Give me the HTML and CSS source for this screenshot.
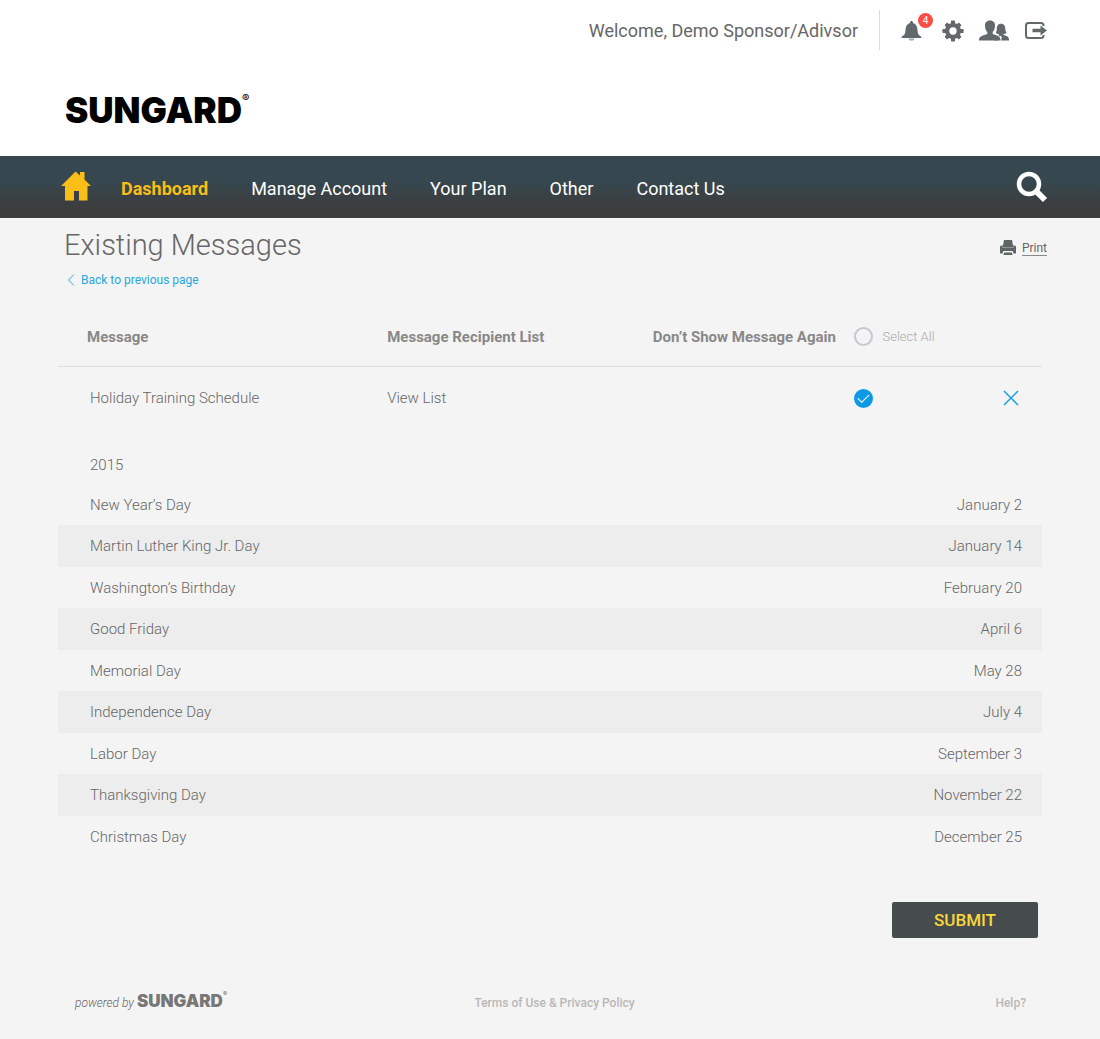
FILE: index.html
```html
<!DOCTYPE html>
<html lang="en">
<head>
<meta charset="utf-8">
<meta name="viewport" content="width=device-width, initial-scale=1">
<title>Existing Messages</title>
<link rel="stylesheet" href="styles.css">
</head>
<body>
<header class="header">
  <div class="userbar">
    <span class="welcome">Welcome, Demo Sponsor/Adivsor</span>
    <div class="tools">
      <button class="tool" type="button" aria-label="Notifications">
        <svg width="24" height="22" viewBox="-2 0 24 22"><path fill="#63696b" d="M9 2.500C9 .5 12 .5 12 2.500V3c3.200 1 4.300 3.500 4.500 7 .2 4 1 4.800 3.800 6.800V18H.7v-1.200C3.500 14.800 4.300 14 4.500 10 4.700 6.500 5.800 4 9 3z"/><path fill="#a9adae" d="M7.500 18.500h6c0 3-6 3-6 0z"/></svg>
        <span class="badge">4</span>
      </button>
      <button class="tool" type="button" aria-label="Settings">
        <svg width="24" height="22" viewBox="-3 0 24 22" overflow="visible"><g fill="#63696b"><path fill-rule="evenodd" d="M11 3a8 8 0 1 0 0 16 8 8 0 0 0 0-16zm0 4.300a3.700 3.700 0 1 1 0 7.400 3.700 3.700 0 0 1 0-7.400z"/><path d="M9 4V1l.6-.6h2.800L13 1v3zM9 18v3l.6.6h2.800L13 21v-3zM4 9H1l-.6.6v2.800L1 13h3zM18 9h3l.6.6v2.800L21 13h-3z"/><path transform="rotate(45 11 11)" d="M9 4V1.500l.6-.6h2.800l.6.6V4zM9 18v2.500l.6.6h2.800l.6-.6V18zM4 9H1.500l-.6.6v2.800l.6.6H4zM18 9h2.500l.6.6v2.800l-.6.6H18z"/></g></svg>
      </button>
      <button class="tool" type="button" aria-label="Contacts">
        <svg width="30" height="22" viewBox="0 0 30 22"><path fill="#63696b" d="M22 3.800c3 0 4.300 2.200 4.300 5 0 2.300.8 3 1.200 4.200-.9.700-2 .9-3 .9v1.200c3 .9 5.500 1.500 5.500 4.500V20.500H15V16l4.800-1v-1.100c-1 0-2-.2-3-.9.500-1.200 1-1.900 1-4.200 0-2.800 1.200-5 4.200-5z"/><path fill="#fff" d="M15.500 13.500 20 15.500l1 1 .8-1 1 2-.8 3.500h-3z"/><path fill="#63696b" d="M11 .5c3.500 0 5.200 2.300 5 5.500-.2 2.800-.9 4.700-2.300 6v2c4 1.500 7.800 2 7.800 6v.5H0V20c0-4 4.500-4.500 8.300-6v-2C6.900 10.700 6.200 8.800 6 6 5.800 2.800 7.500.5 11 .5z"/></svg>
      </button>
      <button class="tool" type="button" aria-label="Sign out">
        <svg width="22" height="22" viewBox="0 0 22 22"><path fill="none" stroke="#63696b" stroke-width="2" d="M18.500 6V5.500q0-2.500-2.500-2.500H3.500Q1 3 1 5.500v10Q1 18 3.500 18H16q2.500 0 2.500-2.500V15"/><path fill="#63696b" d="M7.500 8.700h8V5.500l6.500 5-6.500 5v-3.200h-8z"/></svg>
      </button>
    </div>
  </div>
  <a class="logo" href="#">SUNGARD<sup class="mark">®</sup></a>
</header>

<nav class="nav" aria-label="Main">
  <a class="home" href="#" aria-label="Home"><svg width="30" height="30" viewBox="0 0 30 30"><path fill="#f9be17" d="M14.500.5 19 4.500V1h4.500v7.500L30 15h-3.500v14.500H18V20h-5v9.500H4V15H0z"/></svg></a>
  <a class="navlink current" href="#" aria-current="page">Dashboard</a>
  <a class="navlink" href="#">Manage Account</a>
  <a class="navlink" href="#">Your Plan</a>
  <a class="navlink" href="#">Other</a>
  <a class="navlink" href="#">Contact Us</a>
  <button class="search" type="button" aria-label="Search"><svg width="32" height="32" viewBox="0 0 32 32"><g fill="none" stroke="#fff"><circle cx="13" cy="13" r="10" stroke-width="4.500"/><path stroke-width="6" d="M19.500 19.500 29 29"/></g></svg></button>
</nav>

<main class="main">
  <div class="titlebar">
    <h1 class="title">Existing Messages</h1>
    <a class="print" href="#"><svg width="16" height="16" viewBox="0 0 16 16"><path fill="#5f6466" d="M4 0h8l1 5.500h1.500Q16 5.500 16 7v6.500h-2.500L12.500 11h-9l-1 2.500H0V7q0-1.500 1.500-1.500H3zM4.200 12.500h7.600l.8 2.500H3.400z"/><path fill="none" stroke="#aaa" stroke-width=".7" d="M2.500 5.500v2h11v-2"/></svg><span class="printlabel">Print</span></a>
  </div>
  <a class="back" href="#"><svg width="8" height="12" viewBox="0 0 8 12"><path fill="none" stroke="#28a7e1" d="M7 .5 1.500 6 7 11.500"/></svg>Back to previous page</a>

  <form class="form">
    <table class="messages">
      <colgroup><col class="c-message"><col class="c-list"><col class="c-again"><col class="c-select"><col></colgroup>
      <thead>
        <tr>
          <th class="lead" scope="col">Message</th>
          <th scope="col">Message Recipient List</th>
          <th scope="col">Don’t Show Message Again</th>
          <td class="choice" colspan="2"><label class="selectall"><input class="tick" type="checkbox">Select All</label></td>
        </tr>
      </thead>
      <tbody>
        <tr>
          <td class="first">Holiday Training Schedule</td>
          <td><a class="view" href="#">View List</a></td>
          <td></td>
          <td class="choice"><input class="tick" type="checkbox" checked aria-label="Don’t show Holiday Training Schedule again"></td>
          <td class="end"><button class="remove" type="button" aria-label="Remove message"><svg width="16" height="16" viewBox="0 0 16 16"><path fill="none" stroke="#1ca0e0" stroke-width="1.500" d="M1 1 15 15M15 1 1 15"/></svg></button></td>
        </tr>
      </tbody>
    </table>

    <table class="holidays">
      <caption>2015</caption>
      <tbody>
        <tr><td>New Year’s Day</td><td>January 2</td></tr>
        <tr><td>Martin Luther King Jr. Day</td><td>January 14</td></tr>
        <tr><td>Washington’s Birthday</td><td>February 20</td></tr>
        <tr><td>Good Friday</td><td>April 6</td></tr>
        <tr><td>Memorial Day</td><td>May 28</td></tr>
        <tr><td>Independence Day</td><td>July 4</td></tr>
        <tr><td>Labor Day</td><td>September 3</td></tr>
        <tr><td>Thanksgiving Day</td><td>November 22</td></tr>
        <tr><td>Christmas Day</td><td>December 25</td></tr>
      </tbody>
    </table>
    <button class="submit" type="submit">SUBMIT</button>
  </form>
</main>

<footer class="footer">
  <div class="powered"><span>powered by</span><span class="logo small">SUNGARD<sup class="mark">®</sup></span></div>
  <a class="footlink" href="#">Terms of Use &amp; Privacy Policy</a>
  <a class="footlink" href="#">Help?</a>
</footer>
</body>
</html>
```
FILE: styles.css
```css
* { box-sizing: border-box; }

body {
  margin: 0;
  background: #f4f4f4;
  color: #666;
  font: 300 15px/20px Roboto, "Liberation Sans", sans-serif;
}

a { color: inherit; text-decoration: none; }
button { padding: 0; border: 0; background: none; font: inherit; cursor: pointer; }
svg { display: block; }

/* Header */
.header { padding: 10px 53px 28px 65px; background: #fff; }
.userbar { display: flex; justify-content: flex-end; align-items: center; }
.welcome { padding-top: 2px; font-size: 18px; font-weight: 400; color: #666; }
.tools {
  display: flex;
  align-items: center;
  gap: 16px;
  height: 40px;
  margin-left: 21px;
  padding: 2px 0 0 19px;
  border-left: 1px solid #ddd;
}
.tool { position: relative; }
.badge {
  position: absolute;
  top: -7px;
  right: -10px;
  width: 15px;
  height: 15px;
  border-radius: 50%;
  background: #fb4d43;
  color: #fff;
  font-size: 10px;
  font-weight: 400;
  line-height: 15px;
}
.logo {
  display: flex;
  align-items: flex-start;
  width: max-content;
  margin-top: 42px;
  color: #000;
  font: 900 35px/36px Inter, sans-serif;
}
.mark { font-size: 11px; font-weight: 500; line-height: 12px; }

/* Navigation */
.nav {
  display: flex;
  align-items: center;
  gap: 43px;
  height: 62px;
  padding: 0 52px 0 61px;
  background: linear-gradient(#36474f 0, #36474f 40%, #3d3b3b 90%);
  color: #fff;
  font-size: 18px;
  font-weight: 400;
}
.home { margin-right: -13px; padding-bottom: 2px; }
.navlink { padding-top: 4px; }
.current { color: #f9be17; font-weight: 700; }
.search { margin-left: auto; }

/* Page */
.main { padding: 12px 58px 0; }
.titlebar { display: flex; justify-content: space-between; align-items: center; padding: 0 0 0 6px; }
.title { margin: 0; font-size: 29px; font-weight: 300; line-height: 30px; }
.print { display: flex; align-items: center; gap: 6px; margin-right: -5px; padding-top: 6px; font-size: 12px; font-weight: 400; }
.printlabel { border-bottom: 1px solid #888; line-height: 14px; }
.back { display: flex; align-items: center; gap: 6px; width: max-content; margin: 10px 0 0 9px; color: #28a7e1; font-size: 12px; font-weight: 400; }

.messages, .holidays { width: 100%; border-collapse: collapse; }
.messages { table-layout: fixed; margin-top: 18px; }
.messages th, .messages td { padding: 0 0 0 34px; text-align: left; }
.messages thead tr { height: 58px; border-bottom: 1px solid #ddd; }
.messages tbody tr { height: 64px; }
.messages th { color: #888; font-size: 15px; font-weight: 700; white-space: nowrap; }
.messages .lead, .messages .choice { padding-left: 29px; }
.messages .first { padding-left: 32px; }
.messages .end { padding: 0 23px 0 0; text-align: right; }
.remove { display: block; margin-left: auto; }
.c-message { width: 30%; }
.c-list { width: 27%; }
.c-again { width: 21%; }
.c-select { width: 12%; }
.selectall { display: flex; align-items: center; gap: 9px; color: #aaa; font-size: 13px; }
.tick {
  appearance: none;
  display: grid;
  place-items: center;
  width: 19px;
  height: 19px;
  margin: 0;
  border: 2px solid #c8c8cc;
  border-radius: 50%;
}
.tick:checked { border-color: #0c9ae6; background: #0c9ae6; }
.tick:checked::after {
  content: "";
  width: 10px;
  height: 5px;
  margin-bottom: 3px;
  border: solid #fff;
  border-width: 0 0 1px 1px;
  transform: rotate(-45deg);
}

.holidays { margin-top: 23px; }
.holidays caption { padding: 0 0 7px 32px; line-height: 24px; text-align: left; }
.holidays td { height: 41px; padding: 0 20px 0 32px; }
.holidays td:last-child { text-align: right; }
.holidays tr:nth-child(even) td { height: 42px; background: #ededed; }

.submit {
  display: block;
  width: 146px;
  height: 36px;
  margin: 45px 4px 0 auto;
  border-radius: 2px;
  background: #464b4d;
  color: #fbd73a;
  font-size: 17px;
  font-weight: 500;
}

/* Footer */
.footer {
  display: grid;
  grid-template-columns: 42% 1fr auto;
  align-items: center;
  padding: 53px 74px 24px 75px;
}
.powered { display: flex; align-items: center; gap: 3px; font-size: 12px; font-style: italic; }
.small { margin: 0; padding-bottom: 4px; color: #777; font-size: 17px; line-height: 20px; }
.small .mark { font-size: 6px; line-height: 6px; }
.footlink { color: #b8b8b8; font-size: 12px; font-weight: 500; }
```
